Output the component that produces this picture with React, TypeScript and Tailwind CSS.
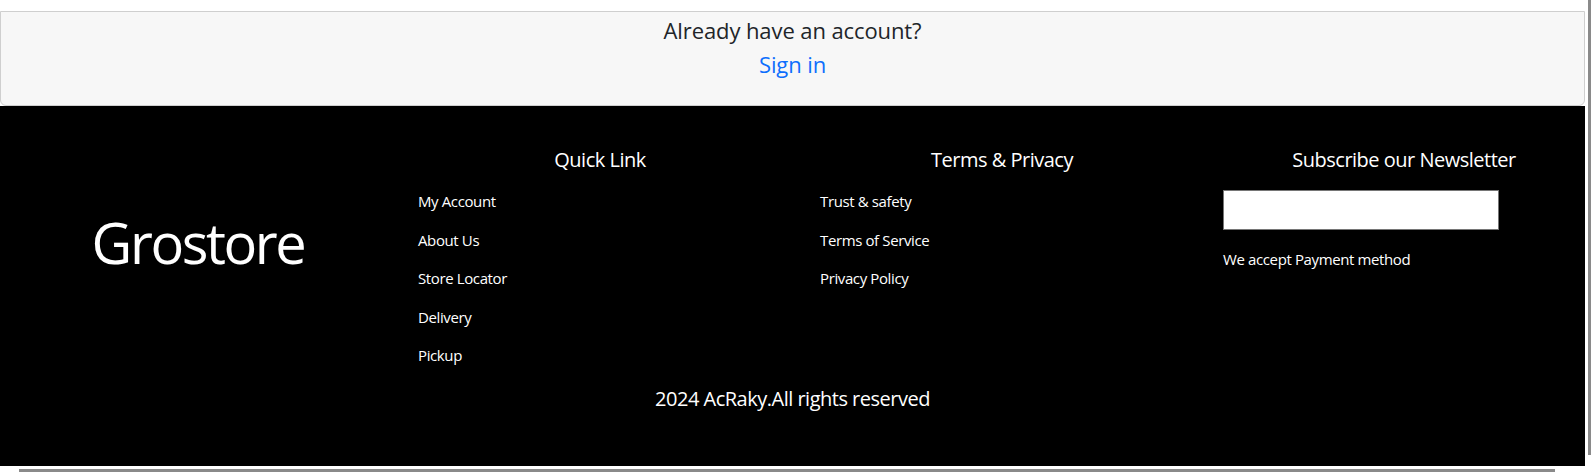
export default function App() {
  return (
    <div className="w-[1591px] h-[472px] flex flex-col bg-white overflow-hidden font-['Open_Sans',sans-serif]">
      <div className="flex flex-1 min-h-0">
        <div className="w-[1585px] flex flex-col">
          <div className="h-[11px]" />

          {/* ================= SIGN IN CARD ================= */}
          <div className="h-[95px] border border-[#cfcfcf] rounded-b-[6px] bg-[#f7f7f7] flex flex-col items-center pt-[3px] text-[22px] leading-[30px] tracking-[-0.1px]">
            <p className="text-[#212529]">Already have an account?</p>
            <a href="#" className="mt-[4px] text-[#0d6efd]">
              Sign in
            </a>
          </div>

          {/* ================= FOOTER ================= */}
          <footer className="flex-1 bg-black text-white overflow-hidden pt-[39px]">
            <div className="grid grid-cols-[repeat(4,402px)] -ml-[3px]">
              <div className="flex justify-center pt-[64px]">
                <div className="text-[56px] leading-[67px] tracking-[-2.4px]">Grostore</div>
              </div>

              <div className="px-[19px]">
                <h5 className="text-center text-[20px] leading-[30px] tracking-[-0.5px]">Quick Link</h5>
                <ul className="mt-[15px] flex flex-col gap-[16.5px] text-[15px] leading-[22px] tracking-[-0.38px]">
                  <li>My Account</li>
                  <li>About Us</li>
                  <li>Store Locator</li>
                  <li>Delivery</li>
                  <li>Pickup</li>
                </ul>
              </div>

              <div className="px-[19px]">
                <h5 className="text-center text-[20px] leading-[30px] tracking-[-0.5px]">Terms &amp; Privacy</h5>
                <ul className="mt-[15px] flex flex-col gap-[16.5px] text-[15px] leading-[22px] tracking-[-0.38px]">
                  <li>Trust &amp; safety</li>
                  <li>Terms of Service</li>
                  <li>Privacy Policy</li>
                </ul>
              </div>

              <div className="px-[20px]">
                <h5 className="text-center text-[20px] leading-[30px] tracking-[-0.5px]">Subscribe our Newsletter</h5>
                <input
                  type="text"
                  className="mt-[15px] block w-[276px] h-[40px] bg-white border border-[#767676]"
                />
                <p className="mt-[18px] text-[15px] leading-[22px] tracking-[-0.38px]">We accept Payment method</p>
              </div>
            </div>

            <p className="mt-[18px] text-center text-[20px] leading-[30px] tracking-[-0.5px]">
              2024 AcRaky.All rights reserved
            </p>
          </footer>
        </div>

        {/* scrollbar */}
        <div className="w-[6px] flex justify-end">
          <div className="w-[3px] h-[455px] bg-[#8a8a8a]" />
        </div>
      </div>

      <div className="h-[6px] flex items-end">
        <div className="ml-[19px] w-[1536px] h-[3px] bg-[#8a8a8a]" />
      </div>
    </div>
  );
}
